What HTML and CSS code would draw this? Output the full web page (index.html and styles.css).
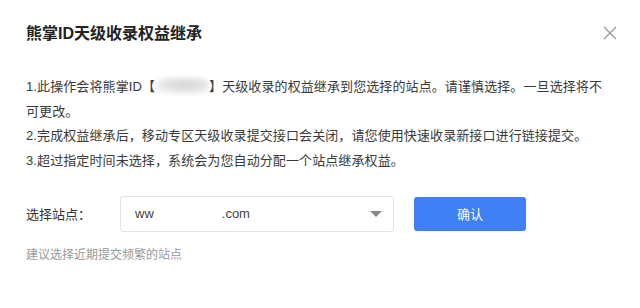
FILE: index.html
```html
<!DOCTYPE html>
<html lang="zh-CN">
<head>
<meta charset="utf-8">
<title>熊掌ID天级收录权益继承</title>
<link rel="stylesheet" href="styles.css">
</head>
<body>
<div class="dialog">
  <div class="header">
    <h2 class="title">熊掌ID天级收录权益继承</h2>
    <button class="close" aria-label="关闭">
      <svg width="14" height="14" viewBox="0 0 14 14"><path d="M1 1L13 13M13 1L1 13" stroke="#999" stroke-width="1.3" fill="none"/></svg>
    </button>
  </div>
  <div class="notice">
    <p>1.此操作会将熊掌ID【<span class="masked"></span>】天级收录的权益继承到您选择的站点。请谨慎选择。一旦选择将不可更改。</p>
    <p>2.完成权益继承后，移动专区天级收录提交接口会关闭，请您使用快速收录新接口进行链接提交。</p>
    <p>3.超过指定时间未选择，系统会为您自动分配一个站点继承权益。</p>
  </div>
  <div class="form-row">
    <label class="label">选择站点：</label>
    <div class="select">
      <span class="value">ww<span class="gap"></span>.com</span>
      <span class="caret"></span>
    </div>
    <button class="confirm">确认</button>
  </div>
  <p class="hint">建议选择近期提交频繁的站点</p>
</div>
</body>
</html>
```
FILE: styles.css
```css
html, body {
  margin: 0;
  padding: 0;
  background: #fff;
}
body {
  font-family: "Liberation Sans", "Noto Sans CJK SC", sans-serif;
  color: #333;
}
.dialog {
  width: 640px;
  height: 308px;
  box-sizing: border-box;
  padding: 22px 26px 0;
}
.header {
  display: flex;
  align-items: center;
  justify-content: space-between;
  height: 24px;
}
.title {
  margin: 0;
  font-size: 16px;
  line-height: 24px;
  font-weight: bold;
  color: #222;
}
.close {
  border: 0;
  background: none;
  padding: 0;
  width: 14px;
  height: 14px;
  margin-right: -3px;
  margin-top: -2px;
  display: flex;
}
.notice {
  margin-top: 29px;
  width: 580px;
}
.notice p {
  margin: 0;
  font-size: 13px;
  line-height: 24.67px;
  color: #3a3a3a;
  letter-spacing: 0.1px;
}
.masked {
  display: inline-block;
  width: 54px;
  height: 16px;
  vertical-align: -3px;
  border-radius: 8px;
  background: radial-gradient(ellipse at 55% 40%, #d6d6d6 0%, #e4e4e4 45%, #f6f6f6 80%, #fff 100%);
  filter: blur(2px);
}
.form-row {
  display: flex;
  align-items: center;
  margin-top: 22px;
  height: 36px;
}
.label {
  width: 94px;
  font-size: 13px;
  color: #333;
}
.select {
  width: 274px;
  height: 36px;
  box-sizing: border-box;
  border: 1px solid #e3e3e3;
  border-radius: 3px;
  display: flex;
  align-items: center;
  justify-content: space-between;
  padding: 0 11px 0 14px;
}
.value {
  font-size: 13px;
  color: #444;
}
.gap {
  display: inline-block;
  width: 68px;
}
.caret {
  width: 0;
  height: 0;
  border-left: 6px solid transparent;
  border-right: 6px solid transparent;
  border-top: 6px solid #888;
}
.confirm {
  margin-left: 20px;
  width: 112px;
  height: 34px;
  border: 0;
  border-radius: 3px;
  background: #3f80f5;
  color: #fff;
  font-family: inherit;
  font-size: 13px;
}
.hint {
  margin: 14px 0 0;
  font-size: 12px;
  line-height: 18px;
  color: #999;
}
```
